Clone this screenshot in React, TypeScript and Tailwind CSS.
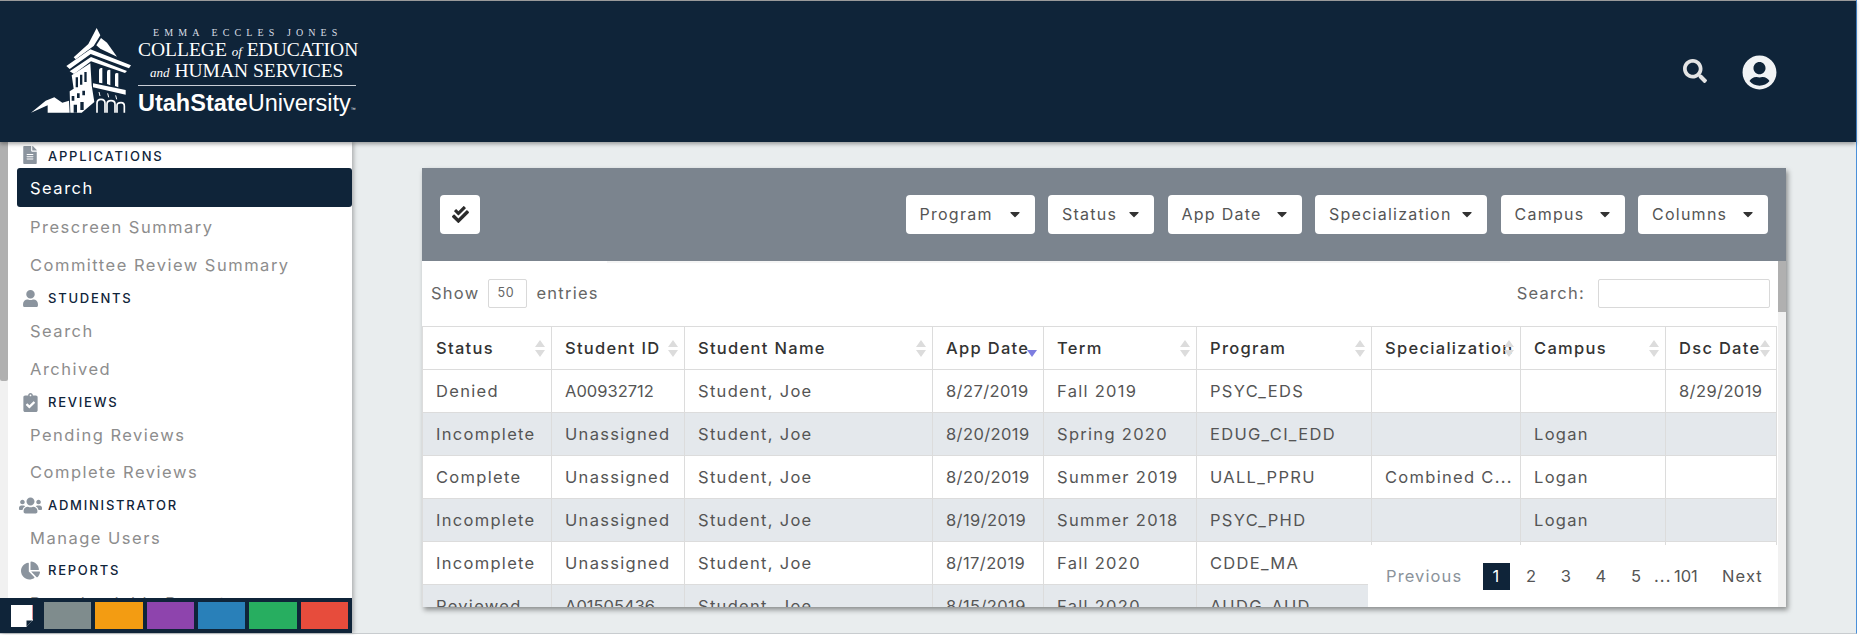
import { FaCaretDown, FaChartPie, FaCheckDouble, FaClipboardCheck, FaFileAlt, FaSearch, FaUser, FaUserCircle, FaUsers } from "react-icons/fa";

const rows = [
  ["Denied", "A00932712", "Student, Joe", "8/27/2019", "Fall 2019", "PSYC_EDS", "", "", "8/29/2019"],
  ["Incomplete", "Unassigned", "Student, Joe", "8/20/2019", "Spring 2020", "EDUG_CI_EDD", "", "Logan", ""],
  ["Complete", "Unassigned", "Student, Joe", "8/20/2019", "Summer 2019", "UALL_PPRU", "Combined C...", "Logan", ""],
  ["Incomplete", "Unassigned", "Student, Joe", "8/19/2019", "Summer 2018", "PSYC_PHD", "", "Logan", ""],
  ["Incomplete", "Unassigned", "Student, Joe", "8/17/2019", "Fall 2020", "CDDE_MA", "", "", ""],
  ["Reviewed", "A01505436", "Student, Joe", "8/15/2019", "Fall 2020", "AUDG_AUD", "", "", ""],
];

const columns = [
  { name: "Status", width: "w-[129px]" },
  { name: "Student ID", width: "w-[133px]" },
  { name: "Student Name", width: "w-[248px]" },
  { name: "App Date", width: "w-[111px]" },
  { name: "Term", width: "w-[153px]" },
  { name: "Program", width: "w-[175px]" },
  { name: "Specialization", width: "w-[149px]" },
  { name: "Campus", width: "w-[145px]" },
  { name: "Dsc Date", width: "w-[111px]" },
];

const filters = [
  { label: "Program", width: "w-[129px]" },
  { label: "Status", width: "w-[106px]" },
  { label: "App Date", width: "w-[134px]" },
  { label: "Specialization", width: "w-[172px]" },
  { label: "Campus", width: "w-[124px]" },
  { label: "Columns", width: "w-[130px]" },
];

const swatches = ["bg-[#7f8c8d]", "bg-[#f39c12]", "bg-[#8e44ad]", "bg-[#2980b9]", "bg-[#27ae60]", "bg-[#e74c3c]"];

// digits run wide in Inter, so ids and dates get less tracking
const cellTracking = (cell: string) => {
  if (cell.includes("/")) return "tracking-[0.4px]";
  if (/^A\d+$/.test(cell)) return "tracking-[0px]";
  return "";
};

const NavHead = ({ icon, label, height, labelClass }: { icon: React.ReactNode; label: string; height: string; labelClass?: string }) => (
  <div className={`flex items-center ${height}`}>
    <span className="w-[48px] -mr-[8px] flex justify-center pl-[12px] pr-[16px] text-[#8b949e]">{icon}</span>
    <span className={`text-[13px] font-medium tracking-[1.75px] text-[#10243a] ${labelClass ?? "mt-[1px]"}`}>{label}</span>
  </div>
);

const NavLink = ({ label, height, active }: { label: string; height: string; active?: boolean }) => (
  <div
    className={`ml-[9px] pl-[13px] pt-[1px] flex items-center text-[16.5px] tracking-[1.5px] whitespace-nowrap rounded-[3px] ${height} ${
      active ? "bg-[#0f2439] text-white" : "text-[#8d8d8d]"
    }`}
  >
    {label}
  </div>
);

const Logo = () => (
  <div className="flex items-start pl-[25px] pt-[21px]">
    <svg width="110" height="98" viewBox="0 0 330 294" className="shrink-0" fill="#fff">
      {/* mountain */}
      <path d="M18 272 L62 236 L88 226 L112 242 L132 236 L134 272 L68 272 L68 250 Z" />
      {/* spire and dome */}
      <path d="M215 18 L226 40 L206 72 L152 112 L146 106 L190 66 Z" />
      <path d="M228 48 L246 62 L276 104 L226 80 L214 70 Z" />
      {/* cornice bands */}
      <path d="M124 132 L196 82 L318 130 L312 139 L197 96 L134 141 Z" />
      <path d="M134 148 L198 105 L306 147 L300 153 L198 118 L147 156 Z" />
      {/* left face of the tower */}
      <path d="M140 160 L196 124 L200 190 L208 240 L170 272 L136 272 L134 208 L146 200 Z" />
      <path d="M152 166 h7 v30 h-7 z M165 158 h7 v30 h-7 z M178 150 h7 v30 h-7 z" fill="#0f2439" />
      <path d="M140 222 h8 v14 h-8 z M156 214 h8 v14 h-8 z M172 206 h8 v14 h-8 z M146 248 h10 v24 h-10 z M166 240 h10 v24 h-10 z" fill="#0f2439" />
      {/* right face: upper arches */}
      <path d="M204 184 L302 204 L302 218 L204 196 Z" />
      <path d="M222 182 V146 Q222 136 232 138 V184 Z M246 186 V150 Q246 142 256 144 V190 Z M270 192 V158 Q270 150 280 154 V196 Z" />
      <path d="M222 210 l3 12 M248 214 l3 12 M272 220 l3 12" stroke="#fff" strokeWidth="3" />
      {/* right face: lower arches */}
      <path d="M216 272 V244 Q216 232 228 232 Q240 232 240 244 V272 M246 272 V246 Q246 236 258 236 Q270 236 270 246 V272 M276 272 V250 Q276 242 288 242 Q298 242 298 252 V272" fill="none" stroke="#fff" strokeWidth="5" />
    </svg>
    <div className="ml-[3px] mt-[4px] w-[224px] flex flex-col text-white font-['Liberation_Serif',serif]">
      <div className="h-[13px] pl-[15px] text-[10px] leading-[13px] tracking-[5.1px] whitespace-nowrap text-[#d9dee4]">EMMA ECCLES JONES</div>
      <div className="h-[21px] text-[19.5px] leading-[21px] whitespace-nowrap">
        COLLEGE <i className="text-[13px]">of</i> EDUCATION
      </div>
      <div className="h-[21px] pl-[12px] text-[19.5px] leading-[21px] whitespace-nowrap">
        <i className="text-[13px]">and</i> HUMAN SERVICES
      </div>
      <div className="mt-[4px] w-[218px] h-px bg-[#c9ced6]" />
      <div className="mt-[5px] h-[24px] text-[23.5px] leading-[24px] whitespace-nowrap font-['Liberation_Sans',sans-serif]">
        <span className="font-bold">UtahState</span>University<span className="text-[5px]">™</span>
      </div>
    </div>
  </div>
);

export default function App() {
  return (
    <div className="w-[1860px] h-[635px] overflow-hidden bg-white font-['Inter',sans-serif]">
      <div className="w-[1857px] h-[634px] flex flex-col bg-[#e9edee] border-r border-[#4a90d9] border-b-[#c8cccf] border-b">
        <header className="relative z-20 h-[142px] shrink-0 flex justify-between bg-[#0f2439] border-t border-[#9a9a9a] shadow-[0_2px_4px_rgba(0,0,0,0.35)]">
          <Logo />
          <div className="flex items-start pt-[54px] pr-[79px]">
            <FaSearch className="mt-[4px] text-[24px] text-[#e4e4e4]" />
            <FaUserCircle className="ml-[35px] text-[35px] text-[#f1f3f5]" />
          </div>
        </header>
        <div className="flex flex-1 min-h-0">
          <aside className="relative z-10 w-[352px] shrink-0 flex flex-col bg-white shadow-[2px_0_4px_rgba(0,0,0,0.25)]">
            <div className="flex-1 min-h-0 flex overflow-hidden">
              <div className="w-[8px] shrink-0 bg-[#f1f1f1]">
                <div className="h-[239px] bg-[#b0b0b0] rounded-b-[2px]" />
              </div>
              <nav className="flex-1 -ml-[8px] pl-[8px] overflow-hidden">
                <NavHead icon={<FaFileAlt className="text-[18px] shrink-0" />} label="APPLICATIONS" height="h-[26px]" labelClass="mt-[3px]" />
                <NavLink label="Search" height="h-[39px]" active />
                <NavLink label="Prescreen Summary" height="h-[39px]" />
                <NavLink label="Committee Review Summary" height="h-[38px]" />
                <NavHead icon={<FaUser className="text-[17px] shrink-0" />} label="STUDENTS" height="h-[28px]" />
                <NavLink label="Search" height="h-[37px]" />
                <NavLink label="Archived" height="h-[39px]" />
                <NavHead icon={<FaClipboardCheck className="text-[19px] shrink-0" />} label="REVIEWS" height="h-[28px]" />
                <NavLink label="Pending Reviews" height="h-[37px]" />
                <NavLink label="Complete Reviews" height="h-[38px]" />
                <NavHead icon={<FaUsers className="text-[23px] shrink-0" />} label="ADMINISTRATOR" height="h-[29px]" />
                <NavLink label="Manage Users" height="h-[35px]" />
                <NavHead icon={<FaChartPie className="text-[19px] shrink-0" />} label="REPORTS" height="h-[31px]" />
                <NavLink label="Downloadable Reports" height="h-[34px]" />
              </nav>
            </div>
            <div className="h-[35px] shrink-0 flex items-center gap-[4px] pl-[11px] pr-[4px] bg-[#0f2439]">
              <svg width="22" height="22" viewBox="0 0 22 22" className="mr-[7px] shrink-0">
                <path d="M0 0 H22 V15 L15 22 H0 Z" fill="#fff" />
                <path d="M22 0 V15" stroke="#c0272d" strokeWidth="1" />
                <path d="M15 22 V15 H22" fill="#0f2439" stroke="#fff" strokeWidth="1" />
              </svg>
              {swatches.map((swatch) => (
                <div key={swatch} className={`h-[27px] flex-1 ${swatch}`} />
              ))}
            </div>
          </aside>
          <main className="flex-1 pl-[70px] pt-[26px]">
            <div className="relative w-[1364px] h-[439px] flex flex-col overflow-hidden bg-white shadow-[2px_3px_5px_rgba(0,0,0,0.4)]">
              <div className="h-[93px] shrink-0 flex items-center justify-between pl-[18px] pr-[18px] bg-[#7b848e]">
                <button className="w-[40px] h-[39px] flex items-center justify-center rounded-[4px] bg-white text-[#2b2b2b]">
                  <FaCheckDouble className="text-[17px]" />
                </button>
                <div className="flex gap-[13.5px]">
                  {filters.map((filter) => (
                    <button
                      key={filter.label}
                      className={`h-[39px] flex items-center justify-between pl-[14px] pr-[12px] pb-[2px] rounded-[4px] bg-white text-[16px] tracking-[1.25px] text-[#555] ${filter.width}`}
                    >
                      {filter.label}
                      <FaCaretDown className="text-[16px] text-[#333]" />
                    </button>
                  ))}
                </div>
              </div>
              <div className="flex-1 min-h-0 flex">
                <div className="w-[1356px] shrink-0 overflow-hidden">
                  <div className="ml-[185px] w-[903px] h-[2px] bg-[#f5f5f5]" />
                  <div className="h-[63px] pb-[2px] flex items-center justify-between pl-[9px] pr-[8px] text-[16.5px] tracking-[1.25px] text-[#666]">
                    <div className="flex items-center">
                      Show
                      <span className="ml-[9px] mr-[9px] w-[39px] h-[29px] pl-[8px] flex items-center rounded-[2px] border border-[#d9d9d9] text-[12.5px] tracking-[0.6px] text-[#666]">50</span>
                      entries
                    </div>
                    <div className="flex items-center">
                      Search:
                      <span className="ml-[13px] w-[172px] h-[29px] rounded-[2px] border border-[#d9d9d9]" />
                    </div>
                  </div>
                  <table className="w-[1354px] table-fixed border-collapse text-[16.5px] tracking-[1.3px]">
                    <thead>
                      <tr className="h-[43px]">
                        {columns.map((col) => (
                          <th key={col.name} className={`relative border border-[#dcdcdc] pl-[13px] text-left font-medium text-[#333] whitespace-nowrap ${col.width}`}>
                            {col.name}
                            <svg width="10" height="17" viewBox="0 0 10 17" className="absolute right-[6px] top-[13px]">
                              {col.name === "App Date" ? (
                                <path d="M0 10 H10 L5 17 Z" fill="#7d7de0" />
                              ) : (
                                <path d="M5 0 L10 7 H0 Z M0 10 H10 L5 17 Z" fill="#dcdcdc" />
                              )}
                            </svg>
                          </th>
                        ))}
                      </tr>
                    </thead>
                    <tbody>
                      {rows.map((row, i) => (
                        <tr key={i} className={`h-[43px] ${i % 2 === 1 ? "bg-[#e4e8ec]" : "bg-white"}`}>
                          {row.map((cell, j) => (
                            <td key={j} className={`border border-[#dcdcdc] pl-[13px] text-[#555] whitespace-nowrap ${cellTracking(cell)}`}>
                              {cell}
                            </td>
                          ))}
                        </tr>
                      ))}
                    </tbody>
                  </table>
                </div>
                <div className="flex-1 bg-[#f1f1f1]">
                  <div className="h-[51px] bg-[#b0b0b0]" />
                </div>
              </div>
              <div className="absolute left-[946px] right-[8px] bottom-0 h-[62px] flex items-start pt-[18px] pl-[18px] bg-white text-[16.5px] tracking-[1.1px] text-[#555]">
                <span className="w-[97px] leading-[26px] text-[#8b939b]">Previous</span>
                <span className="w-[27px] h-[27px] flex items-center justify-center bg-[#0f2439] text-white">1</span>
                <span className="ml-[8px] w-[27px] leading-[26px] text-center">2</span>
                <span className="ml-[8px] w-[27px] leading-[26px] text-center">3</span>
                <span className="ml-[8px] w-[27px] leading-[26px] text-center">4</span>
                <span className="ml-[8px] w-[27px] leading-[26px] text-center">5</span>
                <span className="ml-[4px] w-[20px] leading-[26px]">...</span>
                <span className="w-[48px] leading-[26px] tracking-[0px]">101</span>
                <span className="leading-[26px]">Next</span>
              </div>
            </div>
          </main>
        </div>
      </div>
    </div>
  );
}
